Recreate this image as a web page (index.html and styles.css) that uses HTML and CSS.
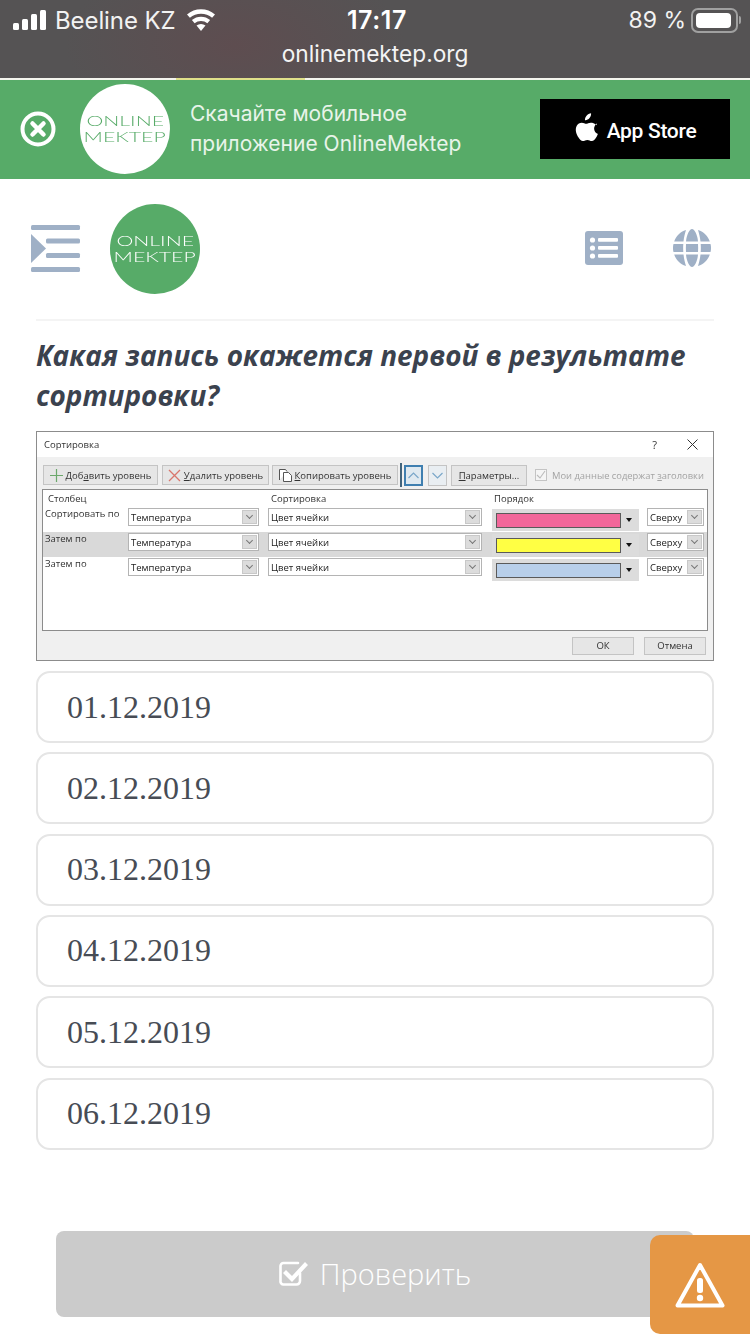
FILE: index.html
```html
<!DOCTYPE html>
<html lang="ru">
<head>
<meta charset="utf-8">
<title>OnlineMektep</title>
<link rel="stylesheet" href="styles.css">
</head>
<body>
<div class="statusbar">
  <div class="status-row">
    <div class="status-left">
      <svg class="signal" width="34" height="20" viewBox="0 0 34 20"><rect x="0" y="13" width="6" height="7" rx="1.5"/><rect x="9" y="9" width="6" height="11" rx="1.5"/><rect x="18" y="4" width="6" height="16" rx="1.5"/><rect x="27" y="0" width="6" height="20" rx="1.5"/></svg>
      <span class="carrier">Beeline KZ</span>
      <svg class="wifi" width="30" height="22" viewBox="0 0 30 22"><path d="M15 22l-4.500-5.400a7 7 0 0 1 9 0z"/><path d="M8.600 14.300l-2.700-3.200a14 14 0 0 1 18.200 0l-2.700 3.200a10 10 0 0 0-12.800 0z"/><path d="M3.900 8.800L1 5.400a21.500 21.500 0 0 1 28 0l-2.900 3.400a17 17 0 0 0-22.200 0z"/></svg>
    </div>
    <div class="status-time">17:17</div>
    <div class="status-right">
      <span class="percent">89 %</span>
      <span class="battery"><span class="battery-fill"></span></span>
      <span class="battery-tip"></span>
    </div>
  </div>
  <div class="url">onlinemektep.org</div>
</div>
<div class="peek"><span class="peek-yellow"></span></div>

<div class="banner">
  <svg class="close" width="36" height="36" viewBox="0 0 36 36"><circle cx="18" cy="18" r="15.500" fill="none" stroke="#fff" stroke-width="4"/><path d="M12.500 12.500l11 11M23.500 12.500l-11 11" stroke="#fff" stroke-width="4.500" stroke-linecap="round"/></svg>
  <div class="logo logo-white"><span>ONLINE</span><span>MEKTEP</span></div>
  <div class="banner-text">Скачайте мобильное<br>приложение OnlineMektep</div>
  <div class="appstore">
    <svg width="24" height="30" viewBox="0 0 26 32"><path fill="#fff" d="M18.500 0c.2 2-.6 3.900-1.700 5.300-1.200 1.500-3 2.600-4.900 2.400-.3-1.900.7-3.900 1.700-5.100C14.800 1.200 16.800.1 18.500 0zM25 11c-.2.100-3.200 1.900-3.200 5.600 0 4.300 3.800 5.800 4 5.800-.1.300-.6 2.200-2 4.200-1.200 1.800-2.500 3.500-4.500 3.500s-2.500-1.200-4.800-1.200c-2.200 0-3 1.200-4.800 1.200-1.900.1-3.400-1.900-4.600-3.600C2.500 23 .7 17.500 3 13.500c1.100-2 3.200-3.300 5.400-3.300 2 0 3.600 1.300 4.800 1.300s3.100-1.500 5.400-1.300c1 0 3.900.4 5.700 2.800z"/></svg>
    <span class="appstore-text">App Store</span>
  </div>
</div>

<header class="header">
  <svg class="menu-icon" width="50" height="48" viewBox="0 0 50 48"><g fill="#9fb0c6"><rect x="0" y="0" width="49" height="5" rx="1.500"/><rect x="15" y="13.500" width="34" height="5" rx="1.500"/><rect x="15" y="28" width="34" height="5" rx="1.500"/><rect x="0" y="42" width="49" height="5" rx="1.500"/><path d="M0 9l15 14.500L0 38z"/></g></svg>
  <div class="logo logo-green"><span>ONLINE</span><span>MEKTEP</span></div>
  <div class="header-spacer"></div>
  <svg class="list-icon" width="38" height="34" viewBox="0 0 38 34"><rect width="38" height="34" rx="3" fill="#9fb0c6"/><g fill="#fff"><circle cx="7.500" cy="9" r="2.600"/><circle cx="7.500" cy="17" r="2.600"/><circle cx="7.500" cy="25" r="2.600"/><rect x="13" y="7" width="20" height="3.800" rx="1"/><rect x="13" y="15" width="20" height="3.800" rx="1"/><rect x="13" y="23" width="20" height="3.800" rx="1"/></g></svg>
  <svg class="globe-icon" width="38" height="38" viewBox="0 0 38 38"><g fill="#9fb0c6"><path d="M13 1C7 3 3 7 1.200 12.500H10.500C11 8 12 4 13 1z"/><path d="M25 1c6 2 10 6 11.800 11.500H27.500C27 8 26 4 25 1z"/><path d="M19 0c2.500 0 5.500 6 6 12.500H13C13.500 6 16.500 0 19 0z"/><path d="M.5 15H10.300c-.2 2.600-.2 5.400 0 8H.5c-.7-2.600-.7-5.400 0-8z"/><path d="M13 15h12c.2 2.600.2 5.400 0 8H13c-.2-2.600-.2-5.400 0-8z"/><path d="M27.700 15h9.800c.7 2.600.7 5.400 0 8h-9.800c.2-2.600.2-5.400 0-8z"/><path d="M1.200 25.500H10.500C11 30 12 34 13 37 7 35 3 31 1.200 25.500z"/><path d="M13 25.500h12C24.500 32 21.500 38 19 38s-5.500-6-6-12.500z"/><path d="M27.500 25.500h9.300C35 31 31 35 25 37c1-3 2-7 2.500-11.500z"/></g></svg>
</header>

<main class="main">
  <h1 class="question">Какая запись окажется первой в результате сортировки?</h1>

  <div class="dialog">
    <div class="dlg-title">
      <span>Сортировка</span>
      <span class="dlg-title-actions"><span class="dlg-help">?</span>
        <svg width="11" height="11" viewBox="0 0 11 11"><path d="M.5.5l10 10M10.500.5l-10 10" stroke="#333" stroke-width="1" fill="none"/></svg></span>
    </div>
    <div class="dlg-toolbar">
      <div class="btn btn-add"><svg width="13" height="13" viewBox="0 0 13 13"><path d="M6.500 0v13M0 6.500h13" stroke="#6ca86c" stroke-width="1.200"/></svg><span>Доб<u>а</u>вить уровень</span></div>
      <div class="btn btn-del"><svg width="13" height="13" viewBox="0 0 13 13"><path d="M1 1l11 11M12 1L1 12" stroke="#d9766c" stroke-width="1.300"/></svg><span><u>У</u>далить уровень</span></div>
      <div class="btn btn-copy"><svg width="13" height="13" viewBox="0 0 13 13"><path d="M.5 11V.5h6l1.500 2M4.500 12.500v-9h5l3 3v6z" stroke="#555" stroke-width="1" fill="#fff"/></svg><span><u>К</u>опировать уровень</span></div>
      <div class="dlg-sep"></div>
      <div class="btn btn-arrow btn-up"><svg width="11" height="7" viewBox="0 0 11 7"><path d="M.5 6l5-5 5 5" stroke="#7aa7c9" stroke-width="1.200" fill="none"/></svg></div>
      <div class="btn btn-arrow btn-down"><svg width="11" height="7" viewBox="0 0 11 7"><path d="M.5 1l5 5 5-5" stroke="#7aa7c9" stroke-width="1.200" fill="none"/></svg></div>
      <div class="btn btn-params"><span><u>П</u>араметры...</span></div>
      <div class="dlg-check"><svg width="10" height="10" viewBox="0 0 10 10"><path d="M1 5l3 3 5-7" stroke="#bbb" stroke-width="1.100" fill="none"/></svg></div>
      <span class="dlg-check-label">Мои данные содержат <u>з</u>аголовки</span>
    </div>
    <div class="dlg-list">
      <div class="dlg-head"><span>Столбец</span><span>Сортировка</span><span>Порядок</span></div>

      <div class="dlg-row">
        <span class="row-label">Сортировать по</span>
        <div class="sel sel-col"><span>Температура</span><i class="chev"></i></div>
        <div class="sel sel-sort"><span>Цвет ячейки</span><i class="chev"></i></div>
        <div class="color"><span class="swatch swatch-pink"></span><span class="caret"></span></div>
        <div class="sel sel-pos"><span>Сверху</span><i class="chev"></i></div>
      </div>
      <div class="dlg-row dlg-row-active">
        <span class="row-label">Затем по</span>
        <div class="sel sel-col"><span>Температура</span><i class="chev"></i></div>
        <div class="sel sel-sort"><span>Цвет ячейки</span><i class="chev"></i></div>
        <div class="color"><span class="swatch swatch-yellow"></span><span class="caret"></span></div>
        <div class="sel sel-pos"><span>Сверху</span><i class="chev"></i></div>
      </div>
      <div class="dlg-row">
        <span class="row-label">Затем по</span>
        <div class="sel sel-col"><span>Температура</span><i class="chev"></i></div>
        <div class="sel sel-sort"><span>Цвет ячейки</span><i class="chev"></i></div>
        <div class="color"><span class="swatch swatch-blue"></span><span class="caret"></span></div>
        <div class="sel sel-pos"><span>Сверху</span><i class="chev"></i></div>
      </div>
    </div>
    <div class="dlg-footer">
      <div class="btn btn-ok">ОК</div>
      <div class="btn btn-cancel">Отмена</div>
    </div>
  </div>

  <div class="options">
    <div class="option">01.12.2019</div>
    <div class="option">02.12.2019</div>
    <div class="option">03.12.2019</div>
    <div class="option">04.12.2019</div>
    <div class="option">05.12.2019</div>
    <div class="option">06.12.2019</div>
  </div>

  <div class="check-btn">
    <svg width="30" height="27" viewBox="0 0 30 27"><path d="M21 13v8a3.500 3.500 0 0 1-3.500 3.500h-13A3 3 0 0 1 1.500 21V6A3 3 0 0 1 4.500 3H19" fill="none" stroke="#fff" stroke-width="2.600" stroke-linecap="round"/><path d="M7 10l6 6L26 2l3 3-16 17-9-9z" fill="#fff"/></svg>
    <span>Проверить</span>
  </div>
</main>

<div class="report">
  <svg width="50" height="46" viewBox="0 0 50 46"><path d="M25 3L47.500 43.500H2.500z" fill="none" stroke="#fff" stroke-width="4" stroke-linejoin="round"/><rect x="22" y="16" width="6" height="15" rx="2.500" fill="#fff"/><circle cx="25" cy="36" r="3.200" fill="#fff"/></svg>
</div>
</body>
</html>
```

FILE: styles.css
```css
* { box-sizing: border-box; }
html, body { margin: 0; padding: 0; }
body {
  position: relative;
  width: 750px;
  height: 1334px;
  overflow: hidden;
  background: #fff;
  font-family: "Open Sans", "Noto Sans", sans-serif;
}

/* Status bar */
.statusbar {
  height: 78px;
  background: radial-gradient(ellipse 170px 90px at 235px 45px, #5e4d50 0%, #555354 100%);
  color: #fff;
  font-family: Inter, "Liberation Sans", sans-serif;
}
.status-row {
  height: 40px;
  padding: 0 9px 0 13px;
  display: grid;
  grid-template-columns: 1fr auto 1fr;
  align-items: center;
}
.status-left { display: flex; align-items: center; }
.status-left svg { fill: #fff; }
.carrier { margin-left: 8px; font-size: 24px; letter-spacing: -.1px; color: #f2f2f2; }
.wifi { margin-left: 11px; }
.status-time { font-size: 25px; font-weight: 600; letter-spacing: .6px; }
.status-right { display: flex; align-items: center; justify-content: flex-end; }
.percent { font-size: 23px; margin-right: 5px; color: #f2f2f2; }
.battery {
  width: 47px; height: 25px; padding: 3px;
  border: 2px solid #a0a0a0; border-radius: 7px;
  display: flex;
}
.battery-fill { flex: 1; background: #fff; border-radius: 4px; margin-right: 2px; }
.battery-tip { width: 2px; height: 8px; margin-left: 1px; background: #a0a0a0; border-radius: 0 2px 2px 0; }
.url { text-align: center; font-size: 22.700px; line-height: 28px; color: #f4f4f4; }

.peek { height: 2px; background: #f4f5ee; padding-left: 176px; }
.peek-yellow { display: block; width: 129px; height: 2px; background: #dfe08a; }

/* Banner */
.banner {
  height: 99px;
  background: #57ab68;
  display: flex;
  align-items: center;
  padding: 0 20px 1px;
}
.close { flex: none; }
.logo {
  width: 90px; height: 90px;
  border-radius: 50%;
  flex: none;
  display: flex;
  flex-direction: column;
  align-items: center;
  justify-content: center;
  font-family: Lato, "Liberation Sans", sans-serif;
  font-weight: 300;
  font-size: 13.300px;
  line-height: 16px;
}
.logo span { transform: scaleX(1.6); }
.logo-white { background: #fff; color: #57ab68; margin-left: 24px; }
.logo-green { background: #57ab68; color: #fff; margin-left: 29px; }
.banner-text {
  margin-left: 20px;
  color: #e8f4ea;
  font-family: Inter, "Liberation Sans", sans-serif;
  font-size: 21px;
  line-height: 30px;
  flex: 1;
}
.appstore {
  width: 190px; height: 60px;
  background: #000;
  display: flex; align-items: center; justify-content: center;
  gap: 9px;
  color: #fff;
}
.appstore svg { margin-top: -3px; }
.appstore-text { font-family: Roboto, sans-serif; font-size: 21px; font-weight: 500; letter-spacing: -.3px; margin-top: 3px; }

/* Header */
.header {
  height: 142px;
  margin: 0 36px;
  border-bottom: 2px solid #f4f4f4;
  display: flex;
  align-items: flex-start;
  padding-top: 25px;
}
.menu-icon { margin: 21px 0 0 -5px; flex: none; }
.header-spacer { flex: 1; }
.list-icon { margin-top: 27px; flex: none; }
.globe-icon { margin: 25px 3px 0 50px; flex: none; }

/* Main */
.main { padding: 14px 36px 0; }
.question {
  margin: 0;
  font-size: 27.900px;
  line-height: 40px;
  font-weight: 700;
  font-style: italic;
  color: #3b424e;
}

/* Dialog */
.dialog {
  margin-top: 16px;
  height: 230px;
  width: 678px;
  border: 1px solid #8c8c8c;
  background: #f0f0f0;
  font-size: 9.500px;
  color: #333;
  display: flex;
  flex-direction: column;
  filter: blur(.3px);
}
.dlg-title {
  height: 25px;
  background: #fff;
  display: flex; align-items: center; justify-content: space-between;
  padding: 0 15px 0 7px;
}
.dlg-title-actions { display: flex; align-items: center; gap: 30px; }
.dlg-help { font-size: 11px; }
.dlg-toolbar {
  height: 32px;
  display: flex; align-items: center;
  padding: 4px 0 0 6px;
  color: #333;
}
.btn {
  height: 20px;
  background: #e6e6e6;
  border: 1px solid #c4c4c4;
  display: flex; align-items: center; justify-content: center;
}
.btn-add { width: 115px; gap: 3px; }
.btn-del { width: 107px; margin-left: 4px; gap: 3px; }
.btn-copy { width: 126px; margin-left: 3px; gap: 3px; }
.dlg-sep { width: 2px; height: 24px; background: #42647c; margin: 0 2px 0 2px; }
.btn-arrow { width: 19px; height: 21px; }
.btn-up { border: 2px solid #3f7fb0; background: #dfe9f0; }
.btn-down { margin-left: 5px; background: #e9eef2; }
.btn-params { width: 76px; height: 21px; margin-left: 4px; }
.dlg-check {
  width: 12px; height: 12px; margin-left: 8px;
  border: 1px solid #c4c4c4; background: #f5f5f5;
  display: flex; align-items: center; justify-content: center;
}
.dlg-check-label { margin-left: 5px; color: #a3a3a3; white-space: nowrap; font-size: 9.400px; }
.dlg-list {
  height: 142px;
  margin: 0 5px;
  border: 1px solid #8c8c8c;
  background: #fff;
}
.dlg-head {
  height: 17px;
  display: grid;
  grid-template-columns: 223px 223px 1fr;
  align-items: center;
  padding-left: 5px;
}
.dlg-row {
  height: 25px;
  display: flex;
  align-items: flex-start;
}
.dlg-row-active { background: #d9d9d9; }
.row-label { width: 85px; padding-left: 2px; white-space: nowrap; line-height: 14px; }
.sel {
  height: 18px;
  margin-top: 1px;
  background: #fff;
  border: 1px solid #b4b4b4;
  display: flex; align-items: center; justify-content: space-between;
  padding-left: 2px;
  color: #222;
}
.sel-col { width: 131px; }
.sel-sort { width: 214px; margin-left: 9px; }
.sel-pos { width: 57px; margin-left: 8px; }
.chev {
  width: 15px; height: 14px; margin-right: 1px;
  background: #dcdcdc;
  border: 1px solid #c8c8c8;
  position: relative;
}
.chev::after {
  content: "";
  position: absolute; left: 4px; top: 2px;
  width: 4px; height: 4px;
  border-right: 1px solid #777; border-bottom: 1px solid #777;
  transform: rotate(45deg);
}
.color {
  width: 147px; height: 22px;
  margin-left: 10px; margin-top: 2px;
  background: #dcdcdc;
  display: flex; align-items: center;
  padding-left: 4px;
}
.swatch { width: 125px; height: 15px; border: 1px solid #5a5a5a; }
.swatch-pink { background: #f2679a; }
.swatch-yellow { background: #ffff44; }
.swatch-blue { background: #b8cfea; }
.caret {
  margin-left: 5px;
  width: 0; height: 0;
  border-left: 3.500px solid transparent;
  border-right: 3.500px solid transparent;
  border-top: 4px solid #111;
}
.dlg-footer {
  flex: 1;
  display: flex; align-items: center; justify-content: flex-end;
  gap: 10px;
  padding-right: 7px;
}
.btn-ok, .btn-cancel { width: 62px; height: 18px; }

/* Options */
.options { margin-top: 10px; display: flex; flex-direction: column; gap: 9.330px; }
.option {
  height: 72px;
  border: 2px solid #e5e5e5;
  border-radius: 14px;
  background: #fff;
  padding-left: 29px;
  display: flex; align-items: center;
  font-family: "Liberation Serif", serif;
  font-size: 32px;
  color: #474c55;
}

/* Check button */
.check-btn {
  margin: 81px 20px 0;
  width: 638px;
  height: 86px;
  background: #cbcbcb;
  border-radius: 8px;
  display: flex; align-items: center; justify-content: center;
  gap: 11px;
  color: #fff;
  font-size: 29px;
  font-weight: 300;
}
.report {
  position: absolute;
  left: 650px; top: 1235px;
  width: 100px; height: 99px;
  background: #e59745;
  border-radius: 10px 0 0 10px;
  display: flex; align-items: center; justify-content: center;
}
```
